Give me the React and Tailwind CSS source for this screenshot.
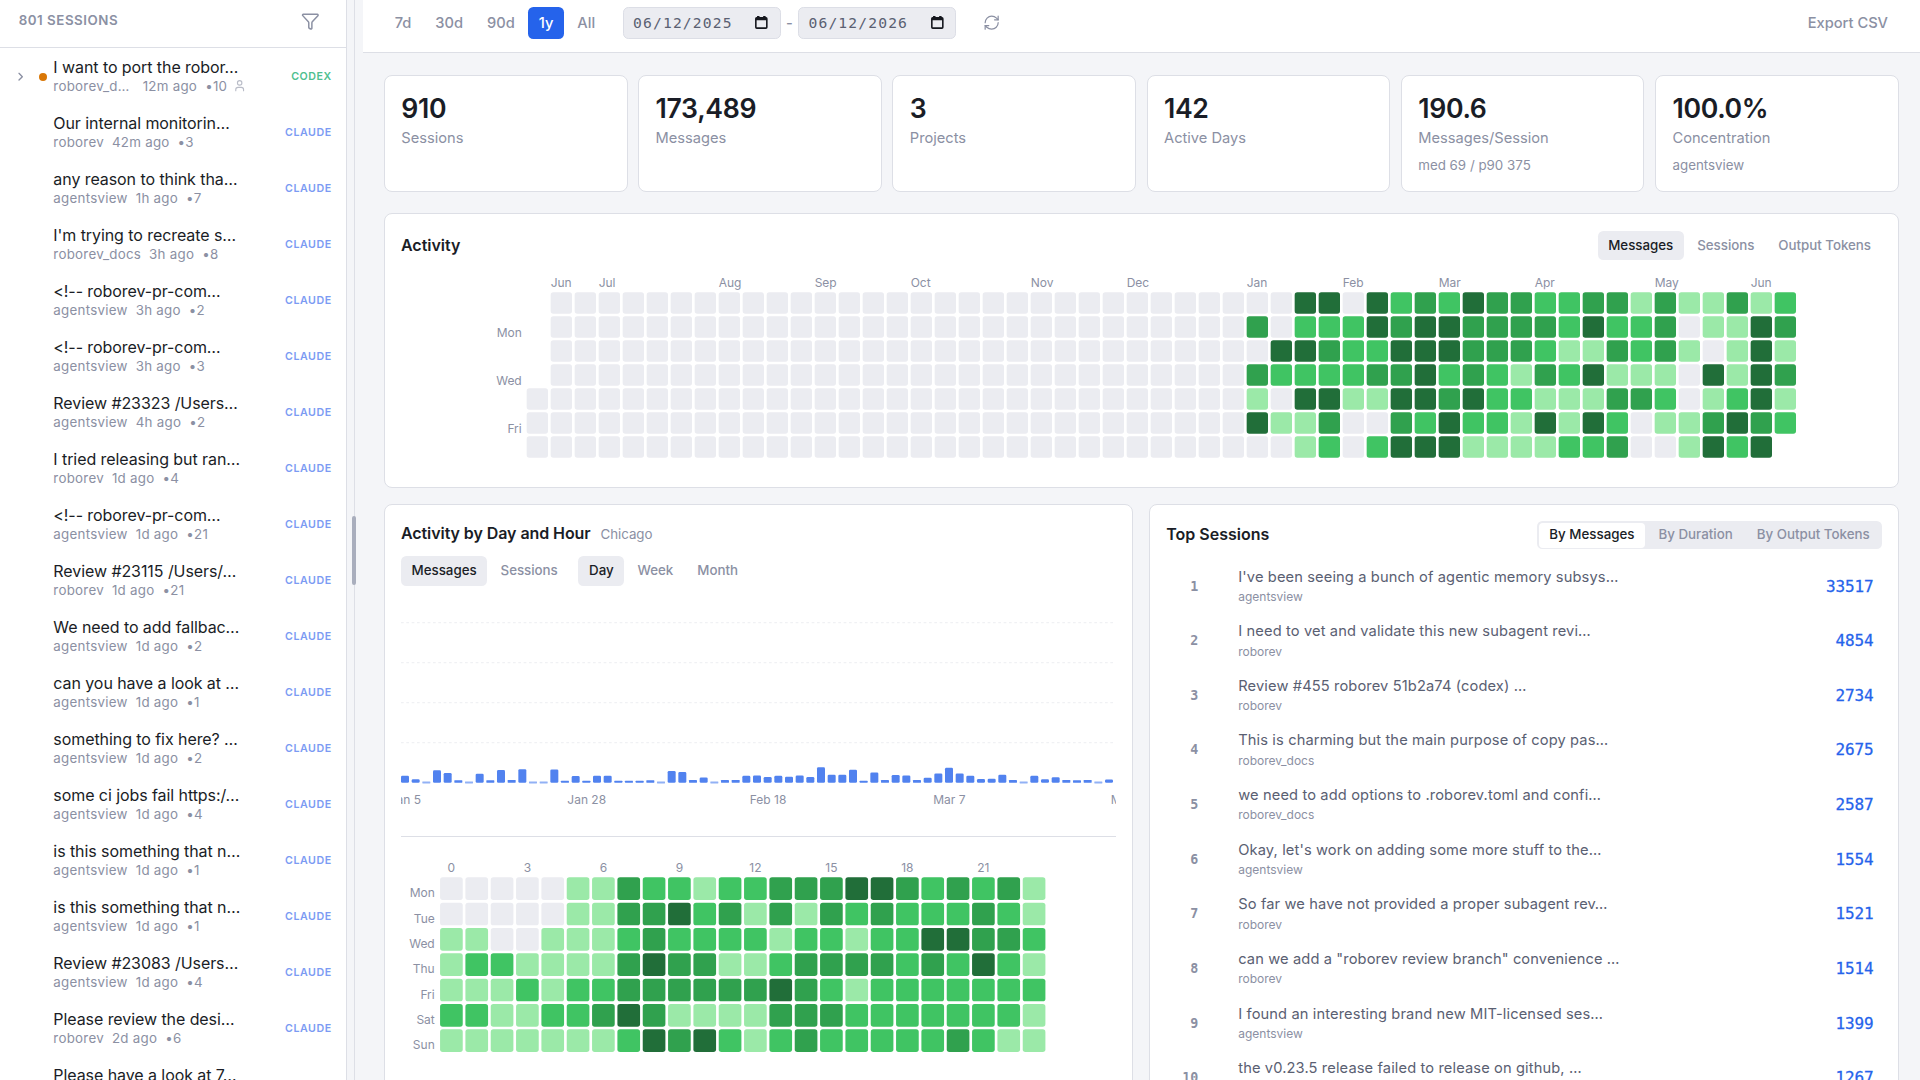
import { ChevronRight, Filter, RefreshCw, User } from 'lucide-react';

const LEVELS = ['#ebecf1', '#9be9a8', '#40c463', '#30a14e', '#216e39'];

const sessions = [
    { title: 'I want to port the robor…', project: 'roborev_d…', time: '12m ago', count: 10, agent: 'CODEX', live: true },
    { title: 'Our internal monitorin…', project: 'roborev', time: '42m ago', count: 3 },
    { title: 'any reason to think tha…', project: 'agentsview', time: '1h ago', count: 7 },
    { title: "I'm trying to recreate s…", project: 'roborev_docs', time: '3h ago', count: 8 },
    { title: '<!-- roborev-pr-com…', project: 'agentsview', time: '3h ago', count: 2 },
    { title: '<!-- roborev-pr-com…', project: 'agentsview', time: '3h ago', count: 3 },
    { title: 'Review #23323 /Users…', project: 'agentsview', time: '4h ago', count: 2 },
    { title: 'I tried releasing but ran…', project: 'roborev', time: '1d ago', count: 4 },
    { title: '<!-- roborev-pr-com…', project: 'agentsview', time: '1d ago', count: 21 },
    { title: 'Review #23115 /Users/…', project: 'roborev', time: '1d ago', count: 21 },
    { title: 'We need to add fallbac…', project: 'agentsview', time: '1d ago', count: 2 },
    { title: 'can you have a look at …', project: 'agentsview', time: '1d ago', count: 1 },
    { title: 'something to fix here? …', project: 'agentsview', time: '1d ago', count: 2 },
    { title: 'some ci jobs fail https:/…', project: 'agentsview', time: '1d ago', count: 4 },
    { title: 'is this something that n…', project: 'agentsview', time: '1d ago', count: 1 },
    { title: 'is this something that n…', project: 'agentsview', time: '1d ago', count: 1 },
    { title: 'Review #23083 /Users…', project: 'agentsview', time: '1d ago', count: 4 },
    { title: 'Please review the desi…', project: 'roborev', time: '2d ago', count: 6 },
    { title: 'Please have a look at 7…', project: 'roborev', time: '2d ago', count: 3 },
];

const stats = [
    { value: '910', label: 'Sessions' },
    { value: '173,489', label: 'Messages' },
    { value: '3', label: 'Projects' },
    { value: '142', label: 'Active Days' },
    { value: '190.6', label: 'Messages/Session', sub: 'med 69 / p90 375' },
    { value: '100.0%', label: 'Concentration', sub: 'agentsview' },
];

const months = [
    ['Jun', 1], ['Jul', 3], ['Aug', 8], ['Sep', 12], ['Oct', 16], ['Nov', 21], ['Dec', 25],
    ['Jan', 30], ['Feb', 34], ['Mar', 38], ['Apr', 42], ['May', 47], ['Jun', 51],
];

// one string per weekday (Sun..Sat), starting at the first week of January
const yearLevels = [
    '00440423243322331311312',
    '30222434433332422301143',
    '04432244433321132310141',
    '32222334232132411104143',
    '10441144342211133201241',
    '41130032422141420113432',
    '0012024441111223001424',
];

const hourLevels = [
    ['Mon', '000001132212233344323231'],
    ['Tue', '000001133423131323222321'],
    ['Wed', '110011123222212212244332'],
    ['Thu', '122111134331123333232421'],
    ['Fri', '111212233333343212222222'],
    ['Sat', '221122343111133322222221'],
    ['Sun', '111111124342123222223211'],
];

const bars = [
    5.2, 2.7, 0, 9.3, 7.3, 1.8, 0, 6.8, 1.8, 9.5, 2, 10.2, 0, 0, 10, 1.4, 5, 1.4, 5.3, 5.3, 1.4, 1.4, 1.4, 1.8, 0,
    8.8, 8, 2, 4, 0, 2, 2, 5.2, 5.4, 4.3, 5.2, 4.5, 5.5, 4.3, 11.6, 6, 6, 9.8, 1.4, 7.7, 2, 5.8, 5.5, 2, 3.8,
    7, 11.2, 7, 5.3, 2.8, 3, 6, 2, 0, 5.2, 2.7, 4.2, 2, 1.8, 2, 0, 2.5,
];

const barLabels = [['Jan 5', 0], ['Jan 28', 17], ['Feb 18', 34], ['Mar 7', 51], ['Mar 28', 68]];

const topSessions = [
    ["I've been seeing a bunch of agentic memory subsys…", 'agentsview', 33517],
    ['I need to vet and validate this new subagent revi…', 'roborev', 4854],
    ['Review #455 roborev 51b2a74 (codex) …', 'roborev', 2734],
    ['This is charming but the main purpose of copy pas…', 'roborev_docs', 2675],
    ['we need to add options to .roborev.toml and confi…', 'roborev_docs', 2587],
    ["Okay, let's work on adding some more stuff to the…", 'agentsview', 1554],
    ['So far we have not provided a proper subagent rev…', 'roborev', 1521],
    ['can we add a "roborev review branch" convenience …', 'roborev', 1514],
    ['I found an interesting brand new MIT-licensed ses…', 'agentsview', 1399],
    ['the v0.23.5 release failed to release on github, …', 'agentsview', 1267],
];

const Toggle = ({ active, children }) => (
    <button
        className={`h-[22px] rounded px-2 text-[10px] font-medium tracking-[-0.02px] whitespace-nowrap ${active ? 'bg-[#ebecf1] text-[#1a1d26]' : 'text-[#8b90a3]'}`}
    >
        {children}
    </button>
);

const SessionRow = ({ session }) => (
    <div className="flex h-[42px] shrink-0 items-center pr-[10.5px]">
        <div className="flex w-[40px] shrink-0 items-center">
            {session.live && (
                <>
                    <ChevronRight className="ml-[10.5px] size-[10px] text-[#8b90a3]" strokeWidth={2.4} />
                    <span className="ml-[8.5px] size-1.5 rounded-full bg-[#d97706]" />
                </>
            )}
        </div>
        <div className="min-w-0 flex-1 pb-[1.2px]">
            <div className="text-[12px] leading-[15px] font-normal tracking-[-0.05px] whitespace-nowrap text-[#1a1d26]">{session.title}</div>
            <div className="flex items-center gap-1.5 text-[10px] leading-[12px] tracking-[0.02em] whitespace-nowrap text-[#8b90a3]">
                <span className={session.live ? 'w-[61px]' : ''}>{session.project}</span>
                <span>{session.time}</span>
                <span>•{session.count}</span>
                {session.live && <User className="-ml-0.5 size-[10px] opacity-60" strokeWidth={2} />}
            </div>
        </div>
        <span
            className={`text-[8px] font-semibold tracking-[0.05em] ${session.agent ? 'text-[#4fbf90]' : 'text-[#7b9bf3]'}`}
        >
            {session.agent || 'CLAUDE'}
        </span>
    </div>
);

const DateField = ({ value }) => (
    <div className="flex h-6 w-[118.5px] items-center justify-between rounded border border-[#dcdee6] bg-[#ebecf1] pr-2 pl-[7px]">
        <span className="font-['DejaVu_Sans_Mono',monospace] text-[11px] font-normal tracking-[0.85px] text-[#5a6072]">{value}</span>
        <svg className="size-[11px] shrink-0 text-[#15171e]" viewBox="0 0 24 24" fill="none" stroke="currentColor" strokeWidth="2.6">
            <rect x="3" y="4.5" width="18" height="17" rx="1.5" />
            <path d="M3 6.5h18M7 1.5v4M17 1.5v4" strokeWidth="4" />
        </svg>
    </div>
);

const YearHeatmap = () => (
    <svg className="mx-auto mt-[7.6px] block" width="986" height="150">
        {months.map(([name, col]) => (
            <text key={col} x={32 + col * 18} y="12.3" fontSize="9" fill="#8b90a3">{name}</text>
        ))}
        {[['Mon', 1], ['Wed', 3], ['Fri', 5]].map(([name, row]) => (
            <text key={name} x="28.3" y={16 + row * 18 + 15.3} fontSize="9" textAnchor="end" fill="#8b90a3">{name}</text>
        ))}
        {yearLevels.map((line, row) =>
            Array.from({ length: 30 + line.length }, (_, col) => {
                if (col === 0 && row < 4) return null;
                const level = col < 30 ? 0 : Number(line[col - 30]);
                return <rect key={`${row}-${col}`} x={32 + col * 18} y={16 + row * 18} width="16" height="16" rx="2" fill={LEVELS[level]} />;
            })
        )}
    </svg>
);

const HourHeatmap = () => (
    <svg className="block" width="500" height="154">
        {[0, 3, 6, 9, 12, 15, 18, 21].map((h) => (
            <text key={h} x={29.3 + h * 19 + 8.5} y="12" fontSize="9" textAnchor="middle" fill="#8b90a3">{h}</text>
        ))}
        {hourLevels.map(([name, line], row) => (
            <g key={name}>
                <text x="25.3" y={16 + row * 19 + 15} fontSize="9" textAnchor="end" fill="#8b90a3">{name}</text>
                {line.split('').map((level, col) => (
                    <rect key={col} x={29.3 + col * 19} y={16 + row * 19} width="17" height="17" rx="2" fill={LEVELS[level]} />
                ))}
            </g>
        ))}
    </svg>
);

const TimelineChart = () => (
    <svg className="-mt-[0.5px] block overflow-hidden" width="536" height="176">
        {[28, 58, 88, 118].map((y) => (
            <line key={y} x1="0" x2="536" y1={y + 0.2} y2={y + 0.2} stroke="#f0f1f4" strokeWidth="1" strokeDasharray="2 2" />
        ))}
        {bars.map((h, i) => (
            <rect
                key={i}
                x={i * 8}
                y={h ? 148.3 - h : 147.3}
                width="6"
                height={h || 1.5}
                rx={h > 2 ? 1 : 0.3}
                fill="#2563eb"
                opacity={h ? 0.8 : 0.5}
            />
        ))}
        {barLabels.map(([text, i]) => (
            <text key={text} x={3.3 + i * 8} y="164" fontSize="9" textAnchor="middle" fill="#8b90a3">{text}</text>
        ))}
    </svg>
);

const Sidebar = () => (
    <aside className="flex w-[260px] shrink-0 flex-col overflow-hidden border-r border-[#dddfe6] bg-white">
        <div className="flex h-9 shrink-0 items-center justify-between border-b border-[#dddfe6] pr-[19.5px] pb-[3.5px] pl-3.5">
            <span className="text-[10px] font-semibold tracking-[0.04em] text-[#8b90a3]">801 SESSIONS</span>
            <Filter className="size-3.5 text-[#8b90a3]" strokeWidth={1.9} />
        </div>
        <div className="flex flex-1 flex-col overflow-hidden pt-[0.75px]">
            {sessions.map((session, i) => (
                <SessionRow key={i} session={session} />
            ))}
        </div>
    </aside>
);

const Toolbar = () => (
    <div className="flex h-10 shrink-0 items-start border-b border-[#dddfe6] bg-white px-4 pt-[5px] text-[11px] font-medium text-[#8b90a3]">
        <div className="flex gap-0.5">
            {['7d', '30d', '90d', '1y', 'All'].map((range) => (
                <button key={range} className={`h-6 rounded px-2 ${range === '1y' ? 'bg-[#2563eb] text-white' : ''}`}>
                    {range}
                </button>
            ))}
        </div>
        <div className="ml-[12.75px] flex items-center gap-1">
            <DateField value="06/12/2025" />
            <span>-</span>
            <DateField value="06/12/2026" />
        </div>
        <button className="ml-[12.75px] flex h-6 w-7 items-center justify-center">
            <RefreshCw className="size-[13px]" strokeWidth={1.7} />
        </button>
        <button className="ml-auto h-6 px-2">Export CSV</button>
    </div>
);

export default function App() {
    return (
        <div className="flex h-[810px] w-[1440px] overflow-hidden bg-[#f4f5f8] font-['Inter',sans-serif] [zoom:1.333333]">
            <Sidebar />
            <div className="flex w-3 shrink-0 items-center justify-center bg-[#f4f5f8]">
                <div className="relative h-full w-px bg-[#dddfe6]">
                    <span className="absolute top-[387px] -left-[1.5px] h-[52px] w-[3px] rounded-full bg-[#a9aebd]" />
                </div>
            </div>
            <main className="flex min-w-0 flex-1 flex-col">
                <Toolbar />
                <div className="flex flex-1 flex-col overflow-hidden p-4">
                    <div className="grid shrink-0 grid-cols-6 gap-2">
                        {stats.map((stat) => (
                            <div key={stat.label} className="h-[88px] rounded-md border border-[#dddfe6] bg-white px-[12.3px] pt-3">
                                <div className="text-[20px] leading-[24px] font-semibold tracking-[-0.25px] text-[#1a1d26]">{stat.value}</div>
                                <div className="mt-[2.4px] text-[11px] leading-[17px] text-[#8b90a3]">{stat.label}</div>
                                {stat.sub && <div className="mt-1 text-[10px] leading-[15px] text-[#8b90a3]">{stat.sub}</div>}
                            </div>
                        ))}
                    </div>

                    <section className="mt-4 h-[206px] shrink-0 rounded-md border border-[#dddfe6] bg-white px-3 pt-[12.6px]">
                        <div className="flex items-center justify-between">
                            <h2 className="text-[12px] font-semibold text-[#1a1d26]">Activity</h2>
                            <div className="flex gap-0.5">
                                <Toggle active>Messages</Toggle>
                                <Toggle>Sessions</Toggle>
                                <Toggle>Output Tokens</Toggle>
                            </div>
                        </div>
                        <YearHeatmap />
                    </section>

                    <div className="mt-3 grid shrink-0 grid-cols-2 gap-3">
                        <section className="h-[460px] rounded-md border border-[#dddfe6] bg-white px-3 pt-[12.6px]">
                            <div className="flex items-baseline gap-[7.5px] leading-[18px]">
                                <h2 className="text-[12px] font-semibold tracking-[-0.05px] text-[#1a1d26]">Activity by Day and Hour</h2>
                                <span className="text-[10px] tracking-[-0.05px] text-[#8b90a3]">Chicago</span>
                            </div>
                            <div className="mt-2 flex gap-[7.5px]">
                                <div className="flex gap-0.5">
                                    <Toggle active>Messages</Toggle>
                                    <Toggle>Sessions</Toggle>
                                </div>
                                <div className="flex gap-0.5">
                                    <Toggle active>Day</Toggle>
                                    <Toggle>Week</Toggle>
                                    <Toggle>Month</Toggle>
                                </div>
                            </div>
                            <div className="border-b border-[#dddfe6] pb-3">
                                <TimelineChart />
                            </div>
                            <div className="pt-[14.8px]">
                                <HourHeatmap />
                            </div>
                        </section>

                        <section className="h-[460px] rounded-md border border-[#dddfe6] bg-white px-3 pt-[12.3px]">
                            <div className="flex items-center justify-between">
                                <h2 className="text-[12px] font-semibold text-[#1a1d26]">Top Sessions</h2>
                                <div className="flex h-[21px] gap-0.5 rounded bg-[#ebecf1] p-px text-[10px] font-medium text-[#8b90a3]">
                                    <button className="rounded-[3px] bg-white px-2 text-[#1a1d26]">By Messages</button>
                                    <button className="px-2">By Duration</button>
                                    <button className="px-2">By Output Tokens</button>
                                </div>
                            </div>
                            <div className="mt-[7.4px]">
                                {topSessions.map(([title, project, value], i) => (
                                    <div key={title} className="flex h-[41px] items-center px-1.5">
                                        <span className="w-[18px] text-right font-['DejaVu_Sans_Mono',monospace] text-[10px] font-semibold text-[#8b90a3]">
                                            {i + 1}
                                        </span>
                                        <div className="ml-[30px] flex-1">
                                            <div className="text-[11px] leading-[16px] tracking-[0.09px] text-[#5a6072]">{title}</div>
                                            <div className="text-[9px] leading-[14px] text-[#8b90a3]">{project}</div>
                                        </div>
                                        <span className="font-['DejaVu_Sans_Mono',monospace] text-[12px] tracking-[-0.05px] text-[#2563eb] [-webkit-text-stroke:0.2px_#2563eb]">
                                            {value}
                                        </span>
                                    </div>
                                ))}
                            </div>
                        </section>
                    </div>
                </div>
            </main>
        </div>
    );
}
